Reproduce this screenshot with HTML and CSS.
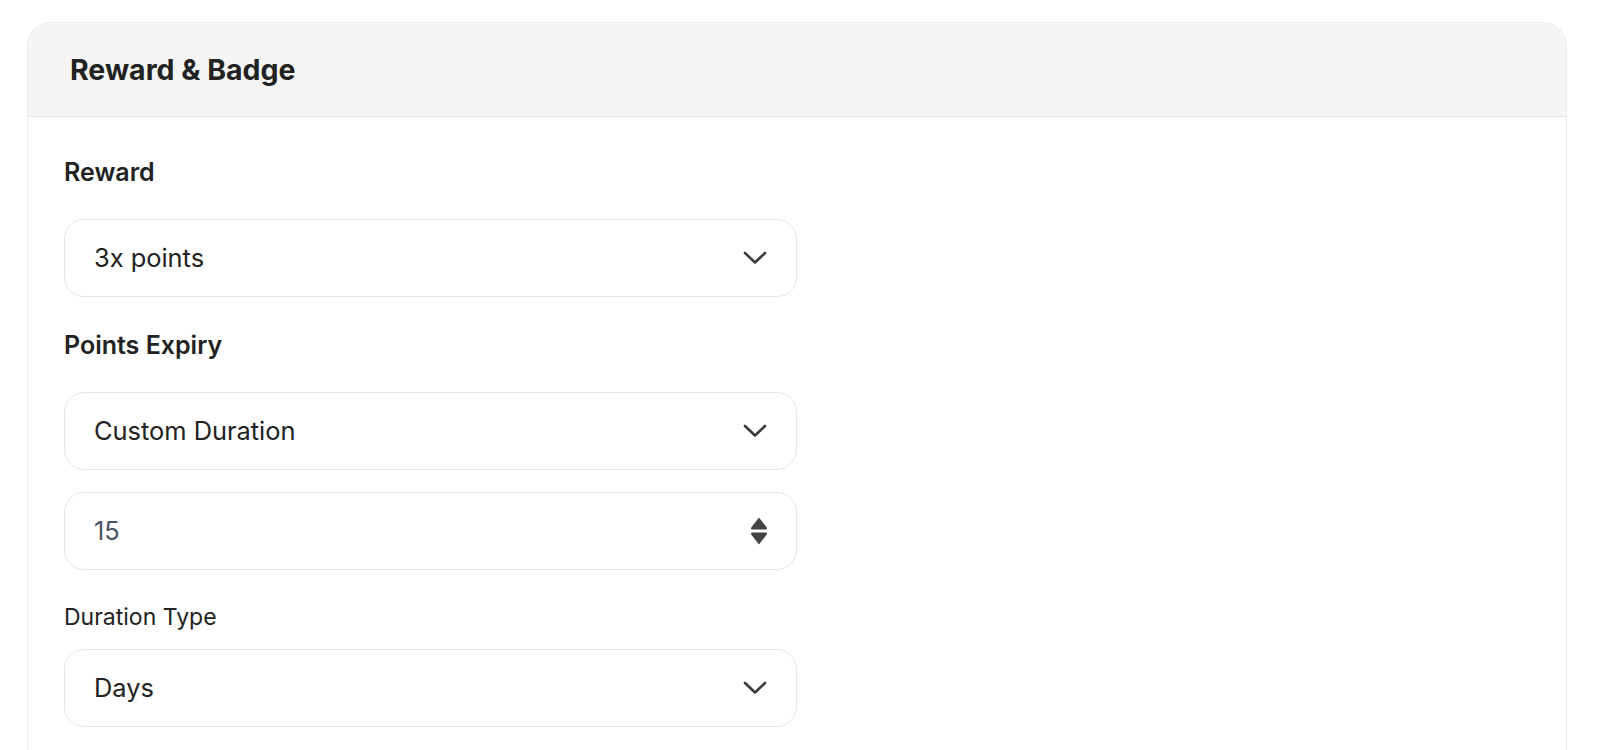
FILE: index.html
```html
<!DOCTYPE html>
<html lang="en">
<head>
<meta charset="utf-8">
<title>Reward &amp; Badge</title>
<link rel="stylesheet" href="styles.css">
</head>
<body>
<section class="card">
  <header class="card-header">
    <h2 class="card-title">Reward &amp; Badge</h2>
  </header>
  <div class="card-body">
    <div class="field">
      <label class="field-label">Reward</label>
      <div class="select">
        <span class="select-value">3x points</span>
        <svg class="chevron" width="24" height="14" viewBox="0 0 24 14" aria-hidden="true"><path d="M2 2 L12 11.5 L22 2" fill="none" stroke="#3b3b3b" stroke-width="2.6" stroke-linecap="round" stroke-linejoin="round"/></svg>
      </div>
    </div>
    <div class="field">
      <label class="field-label">Points Expiry</label>
      <div class="select">
        <span class="select-value">Custom Duration</span>
        <svg class="chevron" width="24" height="14" viewBox="0 0 24 14" aria-hidden="true"><path d="M2 2 L12 11.5 L22 2" fill="none" stroke="#3b3b3b" stroke-width="2.6" stroke-linecap="round" stroke-linejoin="round"/></svg>
      </div>
      <div class="number-input">
        <span class="number-value">15</span>
        <svg class="spinner" width="18" height="28" viewBox="0 0 18 28" aria-hidden="true"><path d="M9 0.5 L16.6 10.2 Q17.8 12.5 15.6 12.5 H2.4 Q0.2 12.5 1.4 10.2 Z" fill="#444"/><path d="M2.4 15.5 H15.6 Q17.8 15.5 16.6 17.8 L9 27.5 L1.4 17.8 Q0.2 15.5 2.4 15.5 Z" fill="#444"/></svg>
      </div>
    </div>
    <div class="field">
      <label class="sub-label">Duration Type</label>
      <div class="select">
        <span class="select-value">Days</span>
        <svg class="chevron" width="24" height="14" viewBox="0 0 24 14" aria-hidden="true"><path d="M2 2 L12 11.5 L22 2" fill="none" stroke="#3b3b3b" stroke-width="2.6" stroke-linecap="round" stroke-linejoin="round"/></svg>
      </div>
    </div>
  </div>
</section>
</body>
</html>
```
FILE: styles.css
```css
* { box-sizing: border-box; }
html, body { margin: 0; padding: 0; background: #ffffff; }
body {
  font-family: Inter, "Noto Sans", "Liberation Sans", sans-serif;
  color: #222222;
  padding: 22px 33px 0 27px;
  overflow: hidden;
  height: 750px;
}
.card {
  border: 1px solid #ebebeb;
  border-radius: 24px 24px 0 0;
  background: #ffffff;
  min-height: 800px;
  overflow: hidden;
}
.card-header {
  height: 94px;
  background: #f5f5f5;
  border-bottom: 1px solid #e3e3e3;
  display: flex;
  align-items: center;
  padding-left: 42px;
}
.card-title {
  margin: 0;
  font-size: 28.5px;
  line-height: 36px;
  font-weight: 700;
  color: #222222;
}
.card-body {
  padding: 39px 36px 0 36px;
  display: flex;
  flex-direction: column;
  gap: 32px;
}
.field {
  display: flex;
  flex-direction: column;
  gap: 22px;
  width: 733px;
}
.field-label {
  font-size: 25px;
  line-height: 32px;
  font-weight: 600;
  margin-bottom: 9px;
}
.sub-label {
  font-size: 23px;
  line-height: 30px;
  font-weight: 400;
  margin-bottom: -5px;
}
.select, .number-input {
  height: 78px;
  border: 1px solid #e6e6e6;
  border-radius: 20px;
  display: flex;
  align-items: center;
  justify-content: space-between;
  padding: 0 29px 0 29px;
  background: #ffffff;
}
.select-value {
  font-size: 25.4px;
  line-height: 32px;
  color: #222222;
}
.number-value {
  font-size: 25.4px;
  line-height: 32px;
  color: #4b5563;
}
.chevron { display: block; }
.spinner { display: block; margin-right: -1px; }
```
